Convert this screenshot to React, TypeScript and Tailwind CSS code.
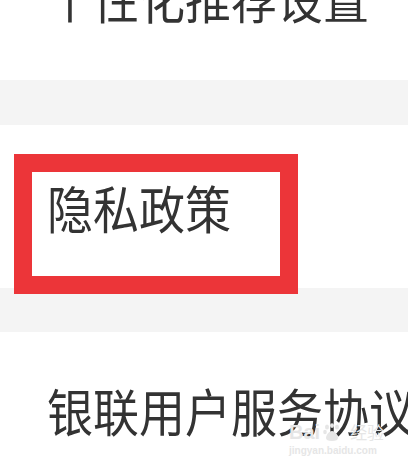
const font = {
  fontFamily: '"Noto Sans CJK SC", "Noto Sans", sans-serif',
}

function Row({ text, className }: { text: string; className: string }) {
  return (
    <div className={`bg-white overflow-hidden ${className}`}>
      <div className="pl-[47px] whitespace-nowrap text-[46px] leading-[46px] text-[#333333] origin-top scale-y-[1.1]">
        {text}
      </div>
    </div>
  )
}

export default function App() {
  return (
    <div
      className="relative w-[408px] h-[468px] overflow-hidden bg-white"
      style={font}
    >
      <div className="flex flex-col">
        <div className="h-[80px] bg-white overflow-hidden">
          <div className="-mt-[28px] pl-[47px] whitespace-nowrap text-[46px] leading-[46px] text-[#333333] origin-top scale-y-[1.1]">
            个性化推荐设置
          </div>
        </div>
        <div className="h-[45px] bg-[#f4f4f4]" />
        <Row text="隐私政策" className="h-[163px] pt-[57px]" />
        <div className="h-[44px] bg-[#f4f4f4]" />
        <Row text="银联用户服务协议" className="h-[136px] pt-[53px]" />
      </div>

      {/* red annotation box */}
      <div className="absolute left-[14px] top-[154px] w-[284px] h-[140px] border-[18px] border-[#ec3539]" />

      {/* watermark */}
      <div className="absolute left-[289px] top-[422px] flex flex-col items-start text-[#e6e6e6]">
        <div className="flex items-center gap-[2px]">
          <span className="text-[20px] leading-[20px] font-bold" style={{ fontFamily: '"Liberation Sans", sans-serif' }}>
            Bai
          </span>
          <svg width="20" height="18" viewBox="0 0 20 18" fill="currentColor">
            <ellipse cx="5" cy="4" rx="2" ry="2.6" />
            <ellipse cx="10" cy="2.6" rx="2" ry="2.4" />
            <ellipse cx="15" cy="4" rx="2" ry="2.6" />
            <ellipse cx="3" cy="9" rx="1.8" ry="2.2" />
            <path d="M10 8c-3 0-6 4-6 7 0 2 2 3 6 3s6-1 6-3c0-3-3-7-6-7z" />
          </svg>
          <span className="ml-[6px] text-[17px] leading-[20px]">经验</span>
        </div>
        <span className="mt-[4px] text-[10px] leading-[10px] font-bold" style={{ fontFamily: '"Liberation Sans", sans-serif' }}>
          jingyan.baidu.com
        </span>
      </div>
    </div>
  )
}
